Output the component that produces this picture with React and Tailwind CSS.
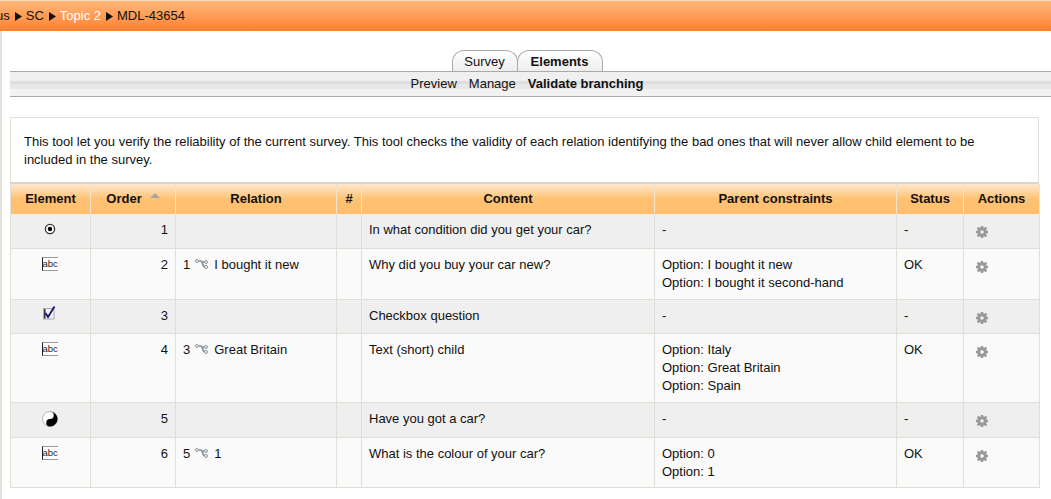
import React from 'react'

const rows = [
  { icon: 'radio', order: 1, parent: ['-'], content: 'In what condition did you get your car?', status: '-', h: 'h-[34px]', odd: true },
  { icon: 'abc', order: 2, rel: ['1', 'I bought it new'], parent: ['Option: I bought it new', 'Option: I bought it second-hand'], content: 'Why did you buy your car new?', status: 'OK', h: 'h-[51px]' },
  { icon: 'check', order: 3, parent: ['-'], content: 'Checkbox question', status: '-', h: 'h-[34px]', odd: true },
  { icon: 'abc', order: 4, rel: ['3', 'Great Britain'], parent: ['Option: Italy', 'Option: Great Britain', 'Option: Spain'], content: 'Text (short) child', status: 'OK', h: 'h-[69px]' },
  { icon: 'yin', order: 5, parent: ['-'], content: 'Have you got a car?', status: '-', h: 'h-[35px]', odd: true },
  { icon: 'abc', order: 6, rel: ['5', '1'], parent: ['Option: 0', 'Option: 1'], content: 'What is the colour of your car?', status: 'OK', h: 'h-[50px]' },
]

const headers = [
  ['Element', 'w-[80px]'],
  ['Order', 'w-[85px]'],
  ['Relation', 'w-[161px]'],
  ['#', 'w-[25px]'],
  ['Content', 'w-[293px]'],
  ['Parent constraints', 'w-[242px]'],
  ['Status', 'w-[67px]'],
  ['Actions', 'w-[76px]'],
]

function Arrow() {
  return (
    <svg width="7" height="9" viewBox="0 0 7 9" className="ml-[5px] mr-[4px] inline-block">
      <path d="M0 0 L7 4.5 L0 9 Z" fill="#111" />
    </svg>
  )
}

function ElementIcon({ type }) {
  if (type === 'radio') {
    return (
      <svg width="12" height="12" viewBox="0 0 12 12" className="mx-auto mt-px block -translate-x-px">
        <circle cx="6" cy="6" r="4.6" fill="#fff" stroke="#333" strokeWidth="1.3" />
        <circle cx="6" cy="6" r="2.2" fill="#000" />
      </svg>
    )
  }
  if (type === 'abc') {
    return (
      <div className="mx-auto flex h-[14px] w-[16px] -translate-x-px items-center border-y border-l border-y-[#999] border-l-[#222] bg-white text-[9.5px] leading-none text-[#222]">
        abc
      </div>
    )
  }
  if (type === 'check') {
    return (
      <svg width="13" height="14" viewBox="0 0 13 14" className="mx-auto -mt-[2px] block -translate-x-px">
        <rect x="0.5" y="2.5" width="10.5" height="10.5" fill="#f4f4f4" stroke="#aaa" />
        <rect x="1" y="3" width="1.5" height="9.5" fill="#333" />
        <path d="M2.5 7 L5 11 L11.5 0.5" fill="none" stroke="#14147a" strokeWidth="1.8" />
      </svg>
    )
  }
  return (
    <svg width="16" height="16" viewBox="0 0 16 16" className="mx-auto block -translate-x-px">
      <circle cx="8" cy="8" r="7.5" fill="#fff" stroke="#999" strokeWidth="0.7" />
      <path d="M8 0.5 A7.5 7.5 0 0 1 8 15.5 A3.75 3.75 0 0 1 8 8 A3.75 3.75 0 0 0 8 0.5 Z" fill="#000" />
      <circle cx="8" cy="4.2" r="1.1" fill="#fff" />
      <circle cx="8" cy="11.8" r="1.1" fill="#000" />
    </svg>
  )
}

function BranchIcon() {
  return (
    <svg width="13" height="10" viewBox="0 0 13 10" className="ml-[5px] mr-[6px] inline-block align-[0px]">
      <path d="M2 2 H6 C8 2 7 8 10 8 M6 3 H10.5" fill="none" stroke="#87929b" strokeWidth="1.7" />
      <circle cx="2" cy="2" r="1.5" fill="#fff" stroke="#87929b" />
      <circle cx="11" cy="3" r="1.5" fill="#fff" stroke="#87929b" />
      <circle cx="11" cy="8" r="1.5" fill="#fff" stroke="#87929b" />
    </svg>
  )
}

function Gear() {
  return (
    <svg width="12" height="12" viewBox="0 0 12 12" className="block">
      <circle cx="6" cy="6" r="3.3" fill="none" stroke="#999" strokeWidth="3" />
      <g stroke="#999" strokeWidth="2.4">
        <path d="M6 0 V2.2" />
        <path d="M6 9.8 V12" />
        <path d="M0 6 H2.2" />
        <path d="M9.8 6 H12" />
        <path d="M1.6 1.6 L3.2 3.2" />
        <path d="M8.8 8.8 L10.4 10.4" />
        <path d="M1.6 10.4 L3.2 8.8" />
        <path d="M8.8 3.2 L10.4 1.6" />
      </g>
    </svg>
  )
}

function Tab({ label, active }) {
  return (
    <div
      className={`flex h-[21px] items-center justify-center rounded-t-[12px] border border-b-0 border-[#aaa] bg-gradient-to-b from-white to-[#eeeeee] pt-[2px] ${
        active ? 'z-10 -ml-px w-[86px] font-bold' : 'w-[66px]'
      }`}
    >
      {label}
    </div>
  )
}

export default function App() {
  const cell = 'border-r border-[#e0dfd8] px-[7px] align-top'

  return (
    <div className="relative h-[499px] w-[1051px] overflow-hidden bg-white font-['Liberation_Sans',sans-serif] text-[13px] leading-[18px] text-[#111]">
      <div className="flex h-[31px] items-center whitespace-nowrap border-t border-[#f4d9bd] bg-gradient-to-b from-[#ffb878] to-[#fd7f2c]">
        <div className="-ml-[4px] flex items-center">
          <span>us</span>
          <Arrow />
          <span>SC</span>
          <Arrow />
          <span className="text-white">Topic 2</span>
          <Arrow />
          <span>MDL-43654</span>
        </div>
      </div>

      <div className="ml-[2px] pl-[8px]">
        <div className="flex justify-center pt-[19px] pr-[7px]">
          <Tab label="Survey" />
          <Tab label="Elements" active />
        </div>
        <div className="flex h-[26px] items-center justify-center gap-[12px] border-y border-y-[#aaa] bg-[linear-gradient(#f0f0f0_0%,#f0f0f0_36%,#dedede_36%,#dedede_52%,#e8e8e8_52%,#e8e8e8_70%,#f2f2f2_70%)] pr-[7px]">
          <span>Preview</span>
          <span>Manage</span>
          <span className="font-bold">Validate branching</span>
        </div>

        <div className="mt-[20px] h-[67px] w-[1029px] border border-b-2 border-[#e0dfd8] border-b-[#d9d5c8] bg-white pl-[13px] pr-[40px] pt-[15px]">
          This tool let you verify the reliability of the current survey. This tool checks the validity of each relation identifying the bad ones that will never allow child element to be included in the survey.
        </div>

        <table className="w-[1029px] table-fixed border-collapse border-x border-b border-[#e0dfd8]">
          <thead>
            <tr className="h-[30px] bg-[linear-gradient(#ffe8cf_0%,#ffc273_50%,#ffbf6d_100%)]">
              {headers.map(([label, width]) => (
                <th key={label} className={`${width} border-r border-[#f3e5cd] p-0 text-center font-bold`}>
                  {label}
                  {label === 'Order' && (
                    <span className="mb-[5px] ml-[8px] inline-block h-0 w-0 border-x-[5px] border-b-[5px] border-x-transparent border-b-[#a5a5a5]" />
                  )}
                </th>
              ))}
            </tr>
          </thead>
          <tbody>
            {rows.map((row) => (
              <tr key={row.order} className={`${row.h} border-b border-[#e0dfd8] ${row.odd ? 'bg-[#efefef]' : 'bg-[#fafafa]'}`}>
                <td className={`${cell} pt-[8px]`}>
                  <ElementIcon type={row.icon} />
                </td>
                <td className={`${cell} pt-[7px] text-right`}>{row.order}</td>
                <td className={`${cell} pt-[7px]`}>
                  {row.rel && (
                    <span>
                      {row.rel[0]}
                      <BranchIcon />
                      {row.rel[1]}
                    </span>
                  )}
                </td>
                <td className={cell} />
                <td className={`${cell} pt-[7px]`}>{row.content}</td>
                <td className={`${cell} pt-[7px]`}>
                  {row.parent.map((line) => (
                    <div key={line}>{line}</div>
                  ))}
                </td>
                <td className={`${cell} pt-[7px]`}>{row.status}</td>
                <td className={`${cell} pl-[12px] pt-[12px]`}>
                  <Gear />
                </td>
              </tr>
            ))}
          </tbody>
        </table>
      </div>
      <div className="absolute left-0 top-[31px] h-[468px] w-[2px] bg-[#e3e2da]" />
    </div>
  )
}
